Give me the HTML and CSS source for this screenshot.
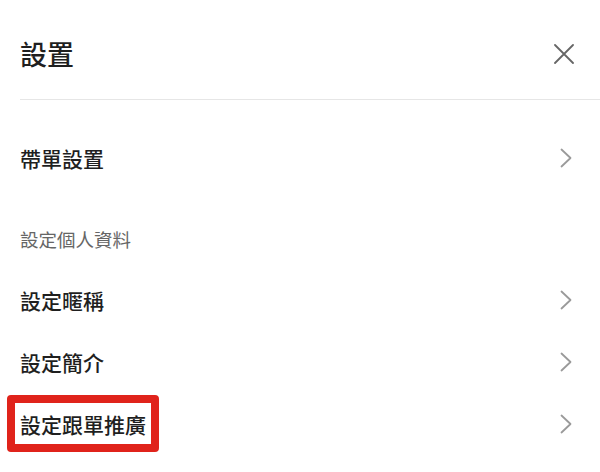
FILE: index.html
```html
<!DOCTYPE html>
<html lang="zh-Hant">
<head>
    <meta charset="UTF-8">
    <meta name="viewport" content="width=device-width, initial-scale=1.0">
    <title>設置</title>
    <link rel="stylesheet" href="styles.css">
</head>
<body>
    <div class="panel">
        <div class="header">
            <h1 class="title">設置</h1>
            <button class="close" aria-label="關閉">
                <svg width="20" height="20" viewBox="0 0 20 20">
                    <path d="M1 1 L19 19 M19 1 L1 19" stroke="#666" stroke-width="1.8" fill="none" stroke-linecap="round"/>
                </svg>
            </button>
        </div>

        <div class="menu">
            <div class="row">
                <span class="label">帶單設置</span>
                <svg class="chevron" width="12" height="20" viewBox="0 0 12 20">
                    <path d="M1.5 1.5 L10.5 10 L1.5 18.5" stroke="#9a9a9a" stroke-width="1.8" fill="none" stroke-linecap="round" stroke-linejoin="round"/>
                </svg>
            </div>

            <div class="section">設定個人資料</div>

            <div class="row">
                <span class="label">設定暱稱</span>
                <svg class="chevron" width="12" height="20" viewBox="0 0 12 20">
                    <path d="M1.5 1.5 L10.5 10 L1.5 18.5" stroke="#9a9a9a" stroke-width="1.8" fill="none" stroke-linecap="round" stroke-linejoin="round"/>
                </svg>
            </div>
            <div class="row">
                <span class="label">設定簡介</span>
                <svg class="chevron" width="12" height="20" viewBox="0 0 12 20">
                    <path d="M1.5 1.5 L10.5 10 L1.5 18.5" stroke="#9a9a9a" stroke-width="1.8" fill="none" stroke-linecap="round" stroke-linejoin="round"/>
                </svg>
            </div>
            <div class="row">
                <span class="label highlight">設定跟單推廣</span>
                <svg class="chevron" width="12" height="20" viewBox="0 0 12 20">
                    <path d="M1.5 1.5 L10.5 10 L1.5 18.5" stroke="#9a9a9a" stroke-width="1.8" fill="none" stroke-linecap="round" stroke-linejoin="round"/>
                </svg>
            </div>
        </div>
    </div>
</body>
</html>
```

FILE: styles.css
```css
body {
    margin: 0;
    background: #fff;
    font-family: "Noto Sans CJK TC", "Noto Sans", sans-serif;
    color: #1f1f1f;
}
.panel {
    padding-left: 20px;
}
.header {
    height: 91px;
    padding-top: 8px;
    display: flex;
    align-items: center;
    justify-content: space-between;
    padding-right: 26px;
    border-bottom: 1px solid #e6e6e6;
}
.title {
    margin: 0;
    font-size: 27px;
    font-weight: 500;
    line-height: 1;
}
.close {
    background: none;
    border: none;
    padding: 0;
    display: flex;
    cursor: pointer;
}
.menu {
    padding-top: 27px;
    padding-right: 28px;
}
.row {
    height: 62px;
    display: flex;
    align-items: center;
    justify-content: space-between;
}
.label {
    font-size: 21px;
    font-weight: 500;
    line-height: 28px;
}
.section {
    padding: 39px 0 18px;
    font-size: 18.5px;
    line-height: 23px;
    color: #666;
}
/* red annotation frame */
.highlight {
    position: relative;
}
.highlight::after {
    content: "";
    position: absolute;
    top: -15px;
    bottom: -14px;
    left: -13px;
    right: -13px;
    border: 8px solid #e0231b;
    border-radius: 4px;
}
```
